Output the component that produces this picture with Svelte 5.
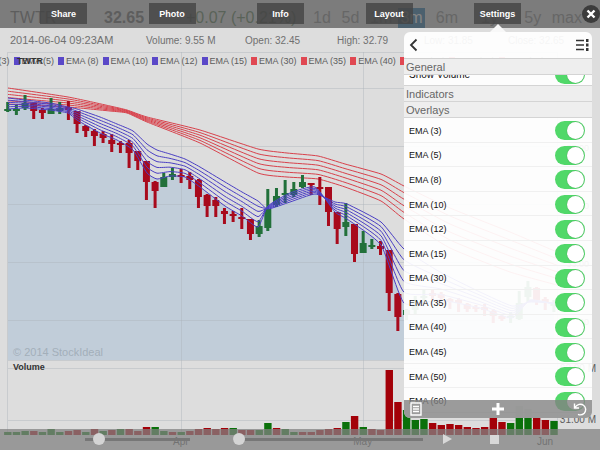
<script lang="ts">
  type Point = [number, number];

  const menu = ["Share", "Photo", "Info", "Layout", "Settings"];
  const ranges = ["1d", "5d", "1m", "3m", "6m", "1y", "5y", "max"];
  const periods = [3, 5, 8, 10, 12, 15, 30, 35, 40, 45, 50, 60];
  const prices = ["36.00", "35.00", "34.00", "33.00", "32.00"];
  const gridY = [88, 146, 204, 262, 320];
  const gridX = [181, 363];

  let showVolume = $state(true);
  let overlays = $state(periods.map((period) => ({ period, on: true })));
  let zoom = $state(9);
  let speed = $state(0);

  // high, low, body top, body bottom, rising
  const candles = [
    [102, 112, 109, 111, 1], [105, 115, 109, 110, 1], [95, 110, 103, 108, 1],
    [103, 119, 103, 111, 0], [108, 119, 110, 113, 0], [98, 114, 109, 114, 1],
    [102, 114, 108, 111, 1], [101, 120, 107, 110, 0], [111, 133, 111, 124, 0],
    [125, 137, 126, 131, 0], [129, 146, 131, 136, 0], [131, 143, 134, 138, 0],
    [134, 152, 140, 144, 0], [141, 153, 143, 145, 0], [140, 168, 143, 153, 0],
    [151, 170, 151, 161, 0], [161, 200, 161, 182, 0], [181, 208, 182, 191, 0],
    [173, 187, 177, 187, 1], [168, 180, 174, 177, 1], [169, 183, 175, 177, 0],
    [172, 189, 176, 180, 0], [179, 208, 180, 197, 0], [194, 217, 195, 206, 0],
    [197, 217, 200, 206, 0], [208, 224, 211, 214, 0], [211, 222, 214, 216, 0],
    [208, 229, 217, 219, 0], [219, 240, 219, 234, 0], [220, 237, 226, 234, 1],
    [189, 231, 209, 228, 1], [188, 207, 196, 205, 1], [180, 203, 193, 194, 1],
    [182, 197, 189, 195, 1], [175, 188, 182, 187, 1], [183, 195, 183, 185, 0],
    [177, 205, 187, 189, 0], [187, 226, 187, 212, 0], [212, 244, 212, 229, 0],
    [203, 236, 222, 227, 1], [224, 262, 224, 254, 0], [231, 253, 243, 253, 1],
    [239, 249, 245, 246, 1], [241, 255, 246, 249, 0], [250, 311, 250, 293, 0],
    [293, 331, 294, 317, 0], [309, 320, 310, 315, 1], [296, 314, 302, 310, 1],
    [290, 302, 296, 298, 1], [290, 300, 293, 296, 0], [292, 300, 294, 298, 0],
    [298, 309, 299, 302, 0], [298, 312, 300, 303, 0], [303, 312, 304, 309, 0],
    [305, 312, 307, 309, 0], [304, 316, 307, 310, 0], [309, 323, 311, 316, 0],
    [314, 321, 316, 319, 0], [312, 323, 316, 318, 1], [291, 320, 303, 319, 1],
    [281, 302, 287, 297, 1], [287, 305, 288, 300, 0], [297, 310, 299, 302, 0],
    [300, 312, 304, 306, 1]
  ];

  const volumes = [
    3, 3, 4, 4, 3, 6, 3, 4, 5, 3, 6, 4, 5, 6, 6, 4, 8, 8, 4, 3, 3, 4, 6, 7, 6, 7,
    7, 5, 5, 5, 12, 7, 6, 3, 3, 3, 5, 6, 7, 13, 19, 8, 6, 5, 65, 33, 25, 15, 16,
    12, 10, 11, 10, 8, 7, 8, 17, 13, 12, 29, 26, 17, 15, 14
  ];
  const volumeUp = [
    0, 1, 2, 4, 5, 6, 9, 11, 13, 17, 18, 20, 26, 29, 30, 32, 33, 39, 41, 46, 47,
    48, 58, 59, 60, 63
  ];

  const blueX = [8, 25, 50, 68, 77, 100, 117, 133, 147, 157, 170, 185, 200, 225, 242, 258, 268, 290, 315, 335, 347, 381, 404, 440, 480, 512, 530, 554];
  const slowBlue = [98, 100, 103, 107, 109, 117, 124, 131, 144, 150, 154, 159, 167, 182, 192, 201, 209, 202, 194, 202, 204, 222, 249, 272, 292, 306, 302, 303];
  const fastBlue = [109, 108, 110, 113, 120, 133, 140, 150, 173, 179, 176, 177, 187, 206, 216, 227, 206, 193, 187, 212, 219, 245, 303, 300, 308, 318, 300, 304];

  const redX = [8, 68, 110, 127, 147, 200, 258, 287, 318, 345, 381, 404, 450, 510, 557];
  const slowRed = [88, 97, 106, 110, 117, 130, 149, 153, 156, 164, 174, 186, 208, 232, 252];
  const fastRed = [104, 107, 111, 113, 122, 143, 173, 177, 179, 187, 201, 219, 248, 272, 285];

  const cx = (i: number) => 7.7 + i * 8.67;

  // curve through every point, with tangents taken from the neighbours
  const smooth = (pts: Point[]) => {
    let d = `M${pts[0][0]} ${pts[0][1]}`;
    for (let i = 0; i < pts.length - 1; i++) {
      const [x0, y0] = pts[Math.max(i - 1, 0)];
      const [x1, y1] = pts[i];
      const [x2, y2] = pts[i + 1];
      const [x3, y3] = pts[Math.min(i + 2, pts.length - 1)];
      d += `C${x1 + (x2 - x0) / 12} ${y1 + (y2 - y0) / 12} ${x2 - (x3 - x1) / 12} ${y2 - (y3 - y1) / 12} ${x2} ${y2}`;
    }
    return d;
  };

  const fan = (xs: number[], a: number[], b: number[]) =>
    [0, 1, 2, 3, 4, 5].map((n) =>
      smooth(xs.map((x, i) => [x, a[i] + ((b[i] - a[i]) * n) / 5] as Point))
    );

  const blueLines = fan(blueX, slowBlue, fastBlue);
  const redLines = fan(redX, slowRed, fastRed);

  // filled below the lowest of the short averages
  const area =
    smooth(blueX.map((x, i) => [x, Math.max(slowBlue[i], fastBlue[i])] as Point)) +
    "V360H8Z";
</script>

<main>
  <div class="chart">
    <div class="quote">
      <span class="symbol">TWTR</span>
      <span class="last">32.65</span>
      <span class="change">+0.07 (+0.21%)</span>
      <div class="ranges">
        {#each ranges as range}
          <span class:active={range === "3m"}>{range}</span>
        {/each}
      </div>
    </div>

    <div class="info">
      <span class="date">2014-06-04 09:23AM</span>
      <span>Volume: 9.55 M</span>
      <span>Open: 32.45</span>
      <span>High: 32.79</span>
      <span>Low: 31.85</span>
      <span>Close: 32.65</span>
    </div>

    <section class="price">
      <svg viewBox="0 52 600 308" preserveAspectRatio="none">
        <path class="area" d={area} />
        {#each gridY as y}
          <path class="grid" d="M8 {y}.5H557" />
        {/each}
        {#each gridX as x}
          <path class="grid" d="M{x}.5 52V360" />
        {/each}
        <path class="grid" d="M7.5 360V52.5H557.5V360" />
        {#each redLines as d}
          <path class="line red" {d} />
        {/each}
        {#each candles as [high, low, top, bottom, up], i}
          <g class={up ? "up" : "down"}>
            <rect x={cx(i) - 1.5} y={high} width="3" height={low - high} />
            <rect x={cx(i) - 3.5} y={top} width="7" height={Math.max(bottom - top, 2)} />
          </g>
        {/each}
        {#each blueLines as d}
          <path class="line blue" {d} />
        {/each}
      </svg>
      <div class="legend">
        {#each periods as period}
          <span class="key" class:slow={period >= 30}>EMA ({period})</span>
        {/each}
      </div>
      <strong class="ticker">TWTR</strong>
      <div class="scale">
        {#each prices as price}
          <span>{price}</span>
        {/each}
      </div>
      <span class="copyright">© 2014 StockIdeal</span>
    </section>

    <section class="volume">
      <svg viewBox="0 360 600 75" preserveAspectRatio="none">
        <path class="grid" d="M8 360.5H557M8 368.5H557M8 420.5H557M7.5 360V435M181.5 360V435M363.5 360V435M557.5 360V435" />
        {#each volumes as v, i}
          <rect
            class={volumeUp.includes(i) ? "vol-up" : "vol-down"}
            x={cx(i) - 3.6}
            y={435 - v}
            width="7.4"
            height={v}
          />
        {/each}
      </svg>
      <strong>Volume</strong>
      <div class="amounts">
        <span>62.00 M</span>
        <span>31.00 M</span>
      </div>
    </section>

    <div class="months">
      <span>Apr</span>
      <span>May</span>
      <span>Jun</span>
    </div>
  </div>

  <nav>
    {#each menu as item}
      <button>{item}</button>
    {/each}
  </nav>
  <button class="close" aria-label="Close">
    <svg viewBox="0 0 18 18">
      <circle cx="9" cy="9" r="9" />
      <path d="M5.5 5.5l7 7M12.5 5.5l-7 7" />
    </svg>
  </button>

  <div class="player">
    <input class="zoom" type="range" aria-label="Zoom" bind:value={zoom} />
    <input class="speed" type="range" aria-label="Speed" bind:value={speed} />
    <button class="play" aria-label="Play">
      <svg viewBox="0 0 9 10"><path d="M0 0L9 5L0 10Z" /></svg>
    </button>
    <button class="stop" aria-label="Stop">
      <svg viewBox="0 0 9 10"><path d="M0 1H9V10H0Z" /></svg>
    </button>
  </div>

  <aside>
    <header>
      <button aria-label="Back">
        <svg width="9" height="14" viewBox="0 0 9 14"><path d="M7.5 1.5L2 7l5.500 5.500" /></svg>
      </button>
      <button aria-label="Options">
        <svg width="13" height="12" viewBox="0 0 13 12">
          <path class="bars" d="M0 1.500h8M0 6h8M0 10.500h8" />
          <path class="dots" d="M10 0h2.500v3h-2.500zM10 4.500h2.500v3h-2.500zM10 9h2.500v3h-2.500z" />
        </svg>
      </button>
    </header>
    <div class="settings">
      <h2>General</h2>
      <div class="clip">
        <label class="row">
          Show Volume
          <input type="checkbox" bind:checked={showVolume} />
        </label>
      </div>
      <h2>Indicators</h2>
      <h2>Overlays</h2>
      <div class="list">
        {#each overlays as overlay}
          <label class="row">
            EMA ({overlay.period})
            <input type="checkbox" bind:checked={overlay.on} />
          </label>
        {/each}
      </div>
    </div>
    <footer>
      <button aria-label="Presets">
        <svg width="12" height="14" viewBox="0 0 12 14">
          <path class="thin" d="M1 1h10v12H1zM3 4.500h6M3 7h6M3 9.500h6" />
        </svg>
      </button>
      <button aria-label="Add">
        <svg width="12" height="12" viewBox="0 0 12 12">
          <path class="thick" d="M6 0v12M0 6h12" />
        </svg>
      </button>
      <button aria-label="Reset">
        <svg width="14" height="14" viewBox="0 0 14 14">
          <path class="thin" d="M1.500 1.500v4.500h4.500M2 5.500C4 2.200 8 1.300 10.500 3.200C13.200 5.300 13.300 9 11.200 11.200C9.500 12.900 7 13.200 5 12.300" />
        </svg>
      </button>
    </footer>
  </aside>
</main>

<style>
  :global(body) {
    margin: 0;
    background: #dcdcdc;
  }

  main {
    position: relative;
    min-height: 100vh;
    display: flex;
    overflow: hidden;
    font-family: "Liberation Sans", Arial, sans-serif;
    font-size: 9px;
    color: #5c5c5c;
  }

  button {
    padding: 0;
    border: 0;
    background: none;
    font: inherit;
    color: inherit;
  }

  svg {
    display: block;
  }

  .chart {
    flex: 1;
    min-width: 0;
    display: flex;
    flex-direction: column;
    background: #dddddd;
  }

  .quote {
    height: 28px;
    display: grid;
    grid-template-columns: 94px 82px 127px 1fr;
    align-items: center;
    padding: 8px 18px 0 10px;
    box-sizing: border-box;
    font-size: 16px;
    line-height: 20px;
    color: #666;
  }

  .last {
    font-weight: bold;
  }

  .change {
    color: #567a50;
    white-space: nowrap;
  }

  .ranges {
    display: grid;
    grid-template-columns: 29fr 29fr 29fr 38fr 46fr 44fr 28fr 26fr;
    justify-items: start;
    color: #888;
  }

  .ranges .active {
    padding: 0 2px;
    background: #1f6fa8;
    color: #fff;
  }

  .info {
    height: 24px;
    display: grid;
    grid-template-columns: 136px 99px 92px 87px 84px 1fr;
    align-items: center;
    padding-left: 10px;
    font-size: 10px;
    color: #707070;
    white-space: nowrap;
  }

  .date {
    font-size: 11px;
  }

  .price,
  .volume {
    display: grid;
    position: relative;
  }

  .price {
    flex: 1;
    min-height: 200px;
  }

  .price > *,
  .volume > * {
    grid-area: 1 / 1;
  }

  .price svg,
  .volume svg {
    width: 100%;
    height: 100%;
    min-height: 0;
  }

  .grid {
    fill: none;
    stroke: #a9b2b8;
    stroke-opacity: 0.4;
  }

  .area {
    fill: #c1cdd9;
  }

  .line {
    fill: none;
    stroke-width: 1;
  }

  .red {
    stroke: #d8414b;
  }

  .blue {
    stroke: #4a3fc4;
  }

  .up {
    fill: #22703a;
  }

  .down {
    fill: #a80a1c;
  }

  .vol-up {
    fill: #0a700a;
  }

  .vol-down {
    fill: #a30008;
  }

  .legend {
    align-self: start;
    display: flex;
    gap: 4px;
    margin: 3px 0 0 -31px;
    overflow: hidden;
    line-height: 12px;
    white-space: nowrap;
  }

  .key::before {
    content: "";
    display: inline-block;
    width: 6px;
    height: 8px;
    margin-right: 2px;
    vertical-align: -1px;
    background: #5a48c8;
  }

  .key.slow::before {
    background: #e04852;
  }

  .ticker {
    align-self: start;
    margin: 3px 0 0 17px;
    line-height: 12px;
    color: #333;
  }

  .scale {
    justify-self: end;
    display: flex;
    flex-direction: column;
    gap: 46px;
    padding: 32px 11px 0 0;
    line-height: 12px;
  }

  .copyright {
    align-self: end;
    padding: 0 0 1px 13px;
    font-size: 11px;
    line-height: 14px;
    color: #a3afba;
  }

  .volume {
    height: 75px;
  }

  .volume strong {
    padding: 1px 0 0 13px;
    line-height: 12px;
    color: #333;
  }

  .amounts {
    justify-self: end;
    display: flex;
    flex-direction: column;
    gap: 39px;
    padding: 3px 4px 0 0;
    font-size: 10px;
    line-height: 12px;
  }

  .months {
    height: 15px;
    display: flex;
    justify-content: space-between;
    padding: 0 47px 0 173px;
    font-size: 10px;
    line-height: 13px;
    color: #444;
  }

  nav {
    position: absolute;
    inset: 0 0 auto 0;
    height: 28px;
    box-sizing: border-box;
    display: flex;
    justify-content: space-between;
    padding: 3px 79px 4px 40px;
    background: rgba(91, 91, 91, 0.75);
  }

  nav button {
    width: 47px;
    background: rgba(68, 68, 68, 0.8);
    font-weight: bold;
    color: #fff;
  }

  .close {
    position: absolute;
    top: 5px;
    right: 0;
    width: 18px;
    height: 18px;
  }

  .close circle {
    fill: #3c3c3c;
  }

  .close path {
    stroke: #fff;
    stroke-width: 2.4;
  }

  .player {
    position: absolute;
    inset: auto 0 0 0;
    height: 21px;
    box-sizing: border-box;
    display: flex;
    align-items: center;
    padding: 0 0 1px 85px;
    background: rgba(130, 130, 130, 0.75);
  }

  .player input {
    appearance: none;
    height: 12px;
    margin: 0;
    background: linear-gradient(#777, #777) center / 100% 3px no-repeat;
  }

  .player input::-webkit-slider-thumb {
    appearance: none;
    width: 12px;
    height: 12px;
    border-radius: 50%;
    background: #d4d4d4;
  }

  .player .zoom {
    width: 105px;
  }

  .player .speed {
    width: 190px;
    margin-left: 43px;
  }

  .player button {
    width: 9px;
    height: 10px;
  }

  .player path {
    fill: #d8d8d8;
  }

  .play {
    margin-left: 20px;
  }

  .stop {
    margin-left: 38px;
  }

  aside {
    position: absolute;
    top: 32px;
    right: 8px;
    bottom: 32px;
    width: 188px;
    display: flex;
    flex-direction: column;
    border-radius: 6px;
    background: rgba(255, 255, 255, 0.93);
  }

  aside::before {
    content: "";
    position: absolute;
    top: -8px;
    left: 86px;
    border: 8px solid transparent;
    border-top: 0;
    border-bottom-color: #f8f8f8;
  }

  header {
    height: 26px;
    display: flex;
    flex-shrink: 0;
    align-items: center;
    justify-content: space-between;
    padding: 0 3px 0 5px;
    border-bottom: 1px solid #d0d0d0;
  }

  header path {
    fill: none;
    stroke: #333;
    stroke-width: 1.8;
  }

  header .bars {
    stroke-width: 1.4;
  }

  header .dots {
    fill: #333;
    stroke: none;
  }

  .settings {
    flex: 1;
    min-height: 0;
    overflow: hidden;
    color: #111;
  }

  h2 {
    height: 16px;
    box-sizing: border-box;
    margin: 0;
    padding-left: 2px;
    border-bottom: 1px solid #d4d4d4;
    background: #eeeeee;
    font-size: 11px;
    font-weight: normal;
    line-height: 17px;
    color: #666;
  }

  .clip {
    height: 10px;
    display: flex;
    align-items: flex-end;
    overflow: hidden;
    border-bottom: 1px solid #d4d4d4;
  }

  .clip .row {
    flex: 1;
    height: 20px;
    align-items: flex-start;
    font-size: 10px;
    line-height: 20px;
  }

  .list {
    height: 295px;
    display: grid;
    grid-template-rows: repeat(12, 1fr);
  }

  .row {
    display: flex;
    align-items: center;
    justify-content: space-between;
    padding: 0 7px 0 5px;
  }

  .list .row {
    border-bottom: 1px solid #f0f0f0;
    padding-top: 2px;
  }

  .row input {
    appearance: none;
    display: flex;
    justify-content: flex-end;
    width: 30px;
    height: 19px;
    box-sizing: border-box;
    margin: 0;
    padding: 1px;
    border-radius: 10px;
    background: #ccc;
  }

  .row input:checked {
    background: #51d869;
  }

  .row input::before {
    content: "";
    width: 17px;
    height: 17px;
    border-radius: 50%;
    background: #fff;
    box-shadow: 0 0 1px #3a8a48;
  }

  .row input:not(:checked) {
    justify-content: flex-start;
  }

  footer {
    position: absolute;
    inset: auto 0 0 0;
    height: 18px;
    display: flex;
    align-items: center;
    justify-content: space-between;
    padding: 0 5px 0 6px;
    box-sizing: border-box;
    border-radius: 0 0 6px 6px;
    background: rgba(130, 130, 130, 0.8);
  }

  footer path {
    fill: none;
    stroke: #fff;
  }

  footer .thin {
    stroke-width: 1.4;
  }

  footer .thick {
    stroke-width: 3;
  }
</style>
